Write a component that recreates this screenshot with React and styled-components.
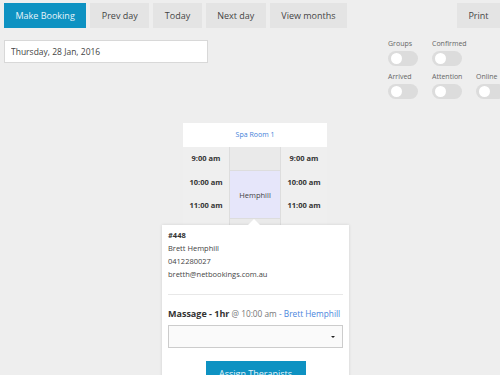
import React from "react";
import styled, { createGlobalStyle } from "styled-components";

const GlobalStyle = createGlobalStyle`
  html, body {
    margin: 0;
    padding: 0;
    background: #eeeeee;
    font-family: "Open Sans", "Liberation Sans", sans-serif;
    color: #333;
    overflow: hidden;
  }
`;

const toolbarButtons = ["Prev day", "Today", "Next day", "View months"];

const topToggles = ["Groups", "Confirmed"];
const bottomToggles = ["Arrived", "Attention", "Online"];

const times = ["9:00 am", "10:00 am", "11:00 am"];

export default function App() {
  return (
    <Page>
      <GlobalStyle />
      <Toolbar>
        <Button primary>Make Booking</Button>
        {toolbarButtons.map((label) => (
          <Button key={label}>{label}</Button>
        ))}
        <Spacer />
        <Button>Print</Button>
      </Toolbar>

      <FilterRow>
        <DateInput defaultValue="Thursday, 28 Jan, 2016" />
        <Toggles>
          {topToggles.map((label) => (
            <ToggleItem key={label}>
              <ToggleLabel>{label}</ToggleLabel>
              <Switch />
            </ToggleItem>
          ))}
          <span />
          {bottomToggles.map((label) => (
            <ToggleItem key={label}>
              <ToggleLabel>{label}</ToggleLabel>
              <Switch />
            </ToggleItem>
          ))}
        </Toggles>
      </FilterRow>

      <Schedule>
        <Room>
          <RoomHeader>Spa Room 1</RoomHeader>
          <RoomBody>
            <TimeColumn>
              {times.map((t) => (
                <TimeCell key={t}>{t}</TimeCell>
              ))}
            </TimeColumn>
            <SlotColumn>
              <EmptySlot />
              <Booking>Hemphill</Booking>
              <EmptySlot />
            </SlotColumn>
            <TimeColumn>
              {times.map((t) => (
                <TimeCell key={t}>{t}</TimeCell>
              ))}
            </TimeColumn>
          </RoomBody>

          <Popover>
            <BookingNo>#448</BookingNo>
            <Detail>Brett Hemphill</Detail>
            <Detail>0412280027</Detail>
            <Detail>bretth@netbookings.com.au</Detail>
            <Divider />
            <Service>
              <b>Massage - 1hr</b> <Muted>@ 10:00 am</Muted>{" "}
              <Link>- Brett Hemphill</Link>
            </Service>
            <Select>
              <Caret />
            </Select>
            <Assign>Assign Therapists</Assign>
          </Popover>
        </Room>
      </Schedule>
    </Page>
  );
}

const Page = styled.div`
  width: 500px;
  height: 375px;
  overflow: hidden;
`;

const Toolbar = styled.div`
  display: flex;
  gap: 4px;
  padding: 3px 0 0 4px;
  height: 25px;
`;

const Spacer = styled.div`
  flex: 1;
`;

const Button = styled.button`
  border: none;
  height: 25px;
  padding: 0 11.5px;
  font-family: inherit;
  font-size: 9px;
  background: ${({ primary }) => (primary ? "#0e92c2" : "#e4e4e4")};
  color: ${({ primary }) => (primary ? "#e8f4fa" : "#444")};
  flex-shrink: 0;
`;

const FilterRow = styled.div`
  display: flex;
  justify-content: space-between;
  padding: 12px 0 0 4px;
`;

const DateInput = styled.input`
  box-sizing: border-box;
  width: 204px;
  height: 23px;
  border: 1px solid #d8d8d8;
  background: #fff;
  padding: 0 6px;
  font-family: inherit;
  font-size: 8.5px;
  color: #444;
  outline: none;
`;

const Toggles = styled.div`
  display: grid;
  grid-template-columns: 44px 44px 44px;
  row-gap: 6px;
  margin-right: -20px;
  margin-top: -1px;
`;

const ToggleItem = styled.div`
  display: flex;
  flex-direction: column;
  gap: 2px;
`;

const ToggleLabel = styled.span`
  font-size: 7px;
  color: #666;
  line-height: 10px;
`;

const Switch = styled.div`
  width: 30px;
  height: 15px;
  border-radius: 8px;
  background: #dcdcdc;
  position: relative;

  &::after {
    content: "";
    position: absolute;
    left: 3px;
    top: 2px;
    width: 11px;
    height: 11px;
    border-radius: 50%;
    background: #fff;
  }
`;

const Schedule = styled.div`
  display: flex;
  justify-content: center;
  padding: 24px 0 0 10px;
`;

const Room = styled.div`
  width: 144px;
  position: relative;
`;

const RoomHeader = styled.div`
  background: #fff;
  height: 24px;
  line-height: 24px;
  text-align: center;
  font-size: 7px;
  color: #3f7fd8;
`;

const RoomBody = styled.div`
  display: grid;
  grid-template-columns: 46px 52px 46px;
  height: 90px;
`;

const TimeColumn = styled.div`
  display: flex;
  flex-direction: column;
  background: #efefef;
`;

const TimeCell = styled.div`
  height: 23.5px;
  line-height: 23.5px;
  text-align: center;
  font-size: 7.5px;
  font-weight: 700;
  color: #333;
`;

const SlotColumn = styled.div`
  display: flex;
  flex-direction: column;
  border-left: 1px solid #dddddd;
  border-right: 1px solid #dddddd;
  background: #eaeaea;
`;

const EmptySlot = styled.div`
  height: 23px;
  border-bottom: 1px solid #dddddd;
`;

const Booking = styled.div`
  height: 47px;
  background: #e6e6fa;
  border-bottom: 1px solid #dddddd;
  display: flex;
  align-items: center;
  justify-content: center;
  font-size: 7.5px;
  color: #444;
`;

const Popover = styled.div`
  position: absolute;
  top: 102px;
  left: -21px;
  width: 175px;
  padding: 4px 6px 0;
  background: #fff;
  box-shadow: 0 0 3px rgba(0, 0, 0, 0.12);

  &::before {
    content: "";
    position: absolute;
    top: -6px;
    left: 86px;
    border-left: 6px solid transparent;
    border-right: 6px solid transparent;
    border-bottom: 6px solid #fff;
  }
`;

const BookingNo = styled.div`
  font-size: 7.5px;
  font-weight: 700;
  line-height: 13px;
  color: #333;
`;

const Detail = styled.div`
  font-size: 7.5px;
  line-height: 13px;
  color: #444;
`;

const Divider = styled.div`
  height: 1px;
  background: #e8e8e8;
  margin: 13px 0 13px;
`;

const Service = styled.div`
  font-size: 8.3px;
  line-height: 11px;
  color: #333;

  b {
    font-size: 9px;
  }
`;

const Muted = styled.span`
  color: #777;
`;

const Link = styled.span`
  color: #4a86dd;
`;

const Select = styled.div`
  box-sizing: border-box;
  height: 23px;
  margin-top: 6px;
  border: 1px solid #cccccc;
  background: #fafafa;
  position: relative;
`;

const Caret = styled.div`
  position: absolute;
  right: 7px;
  top: 10px;
  border-left: 2px solid transparent;
  border-right: 2px solid transparent;
  border-top: 2px solid #222;
`;

const Assign = styled.button`
  display: block;
  margin: 13px auto 0;
  width: 100px;
  height: 24px;
  border: none;
  background: #0e92c2;
  color: #e8f4fa;
  font-family: inherit;
  font-size: 9px;
`;
